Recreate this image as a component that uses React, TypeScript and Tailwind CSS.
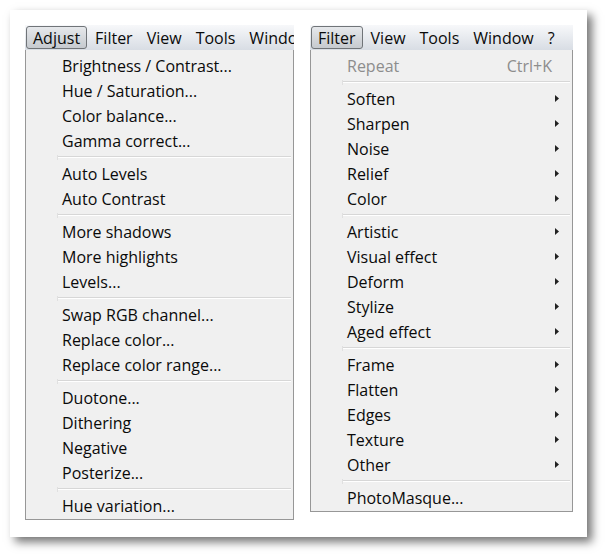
import React from 'react';

type Entry = { label: string; sub?: boolean; disabled?: boolean; shortcut?: string } | 'sep';

const adjustItems: Entry[] = [
  { label: 'Brightness / Contrast...' },
  { label: 'Hue / Saturation...' },
  { label: 'Color balance...' },
  { label: 'Gamma correct...' },
  'sep',
  { label: 'Auto Levels' },
  { label: 'Auto Contrast' },
  'sep',
  { label: 'More shadows' },
  { label: 'More highlights' },
  { label: 'Levels...' },
  'sep',
  { label: 'Swap RGB channel...' },
  { label: 'Replace color...' },
  { label: 'Replace color range...' },
  'sep',
  { label: 'Duotone...' },
  { label: 'Dithering' },
  { label: 'Negative' },
  { label: 'Posterize...' },
  'sep',
  { label: 'Hue variation...' },
];

const filterItems: Entry[] = [
  { label: 'Repeat', disabled: true, shortcut: 'Ctrl+K' },
  'sep',
  { label: 'Soften', sub: true },
  { label: 'Sharpen', sub: true },
  { label: 'Noise', sub: true },
  { label: 'Relief', sub: true },
  { label: 'Color', sub: true },
  'sep',
  { label: 'Artistic', sub: true },
  { label: 'Visual effect', sub: true },
  { label: 'Deform', sub: true },
  { label: 'Stylize', sub: true },
  { label: 'Aged effect', sub: true },
  'sep',
  { label: 'Frame', sub: true },
  { label: 'Flatten', sub: true },
  { label: 'Edges', sub: true },
  { label: 'Texture', sub: true },
  { label: 'Other', sub: true },
  'sep',
  { label: 'PhotoMasque...' },
];

function MenuBar({ items, active }: { items: string[]; active: string }) {
  return (
    <div className="flex h-[25px] items-center bg-gradient-to-b from-[#f7f8fa] to-[#d8dde4] pl-px overflow-hidden whitespace-nowrap">
      {items.map((it) =>
        it === active ? (
          <div
            key={it}
            className="h-[23px] px-[6px] flex items-center rounded-[3px] border border-[#707478] bg-gradient-to-b from-[#e6e8eb] to-[#c6cacf] mr-[1px]"
          >
            {it}
          </div>
        ) : (
          <div key={it} className="h-[23px] px-[7px] flex items-center">
            {it}
          </div>
        )
      )}
    </div>
  );
}

function Dropdown({ entries }: { entries: Entry[] }) {
  return (
    <div className="border border-t-0 border-[#979797] bg-[#f0f0f0] pt-[3px] pb-[1px]">
      {entries.map((e, i) =>
        e === 'sep' ? (
          <div key={i} className="h-[8px] flex items-center pl-[31px] pr-[2px]">
            <div className="w-px h-[5px] bg-[#e0e0e0]" />
            <div className="flex-1 flex flex-col">
              <div className="h-px bg-[#d7d7d7]" />
              <div className="h-px bg-white" />
            </div>
          </div>
        ) : (
          <div
            key={i}
            className={`h-[25px] flex items-center pl-[36px] pr-[12px] ${e.disabled ? 'text-[#8d8d8d]' : 'text-[#0a0a0a]'}`}
          >
            <span className="flex-1">{e.label}</span>
            {e.shortcut && <span className="mr-[8px]">{e.shortcut}</span>}
            {e.sub && (
              <svg width="4" height="7" viewBox="0 0 4 7" className="mr-[1px]">
                <path d="M0 0 L4 3.5 L0 7 Z" fill="#222" />
              </svg>
            )}
          </div>
        )
      )}
    </div>
  );
}

export default function App() {
  return (
    <div className="w-[605px] h-[554px] bg-white p-[10px]" style={{ fontFamily: '"Open Sans", "Noto Sans", sans-serif' }}>
      <div className="w-[577px] h-[527px] bg-white shadow-[5px_5px_9px_rgba(0,0,0,0.55)] flex items-start pl-[15px] pt-[15px] gap-[16px] text-[16px] text-[#0a0a0a]">
        <div className="w-[269px]">
          <MenuBar items={['Adjust', 'Filter', 'View', 'Tools', 'Window']} active="Adjust" />
          <Dropdown entries={adjustItems} />
        </div>
        <div className="w-[263px]">
          <MenuBar items={['Filter', 'View', 'Tools', 'Window', '?']} active="Filter" />
          <Dropdown entries={filterItems} />
        </div>
      </div>
    </div>
  );
}
